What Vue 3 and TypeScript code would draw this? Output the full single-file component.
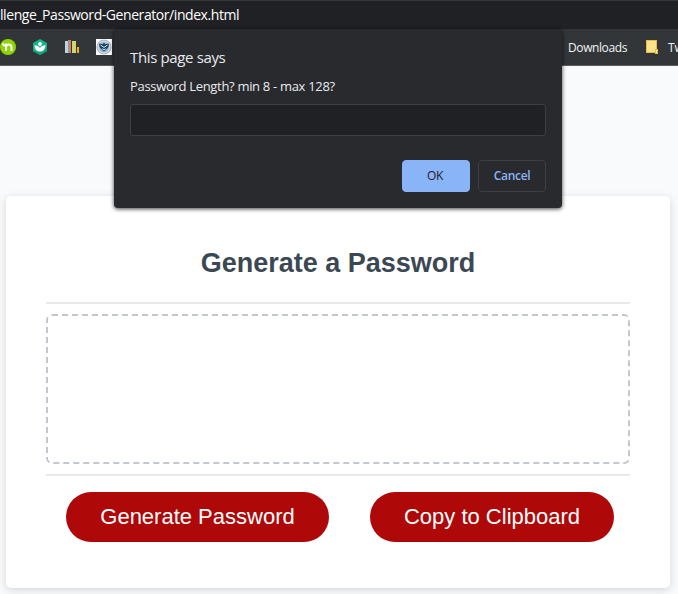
<script setup lang="ts">
import { ref } from 'vue'

const passwordLength = ref<string>('')
const password = ref<string>('')
</script>

<template>
  <div class="window">
    <div class="address"><span class="url">llenge_Password-Generator/index.html</span></div>
    <nav class="bookmarks">
      <svg class="icon" viewBox="0 0 16 16">
        <circle cx="8" cy="8" r="8" fill="#8ed500" />
        <path d="M3 4.200c0 1.800.8 2.600 3 2.600M6 12V4.500M6 8.500c0-4 5.500-4 5.500 0V12" fill="none" stroke="#fff" stroke-width="2" />
      </svg>
      <svg class="icon" viewBox="0 0 16 16">
        <path d="M8 0l7 3.900v8.200L8 16l-7-3.900V3.900z" fill="#12b58b" />
        <path d="M1 12.100L15 8v4.100L8 16z" fill="#0aa57c" />
        <path d="M2.500 6.300c2.700.1 4.400 1 5.500 2.800 1.100-1.800 2.800-2.700 5.500-2.800-.2 4.200-2.200 6.300-5.500 6.300s-5.300-2.100-5.500-6.300z" fill="#fff" />
        <circle cx="8" cy="5" r="1.900" fill="#fff" />
      </svg>
      <svg class="icon" viewBox="0 0 16 16">
        <path d="M1 2h3v12H1z" fill="#b4d7df" />
        <path d="M4 1h3v13H4z" fill="#c77f80" />
        <path d="M8 2h4v12H8z" fill="#cbd86b" />
        <path d="M13 8h2v6h-2z" fill="#f4b400" />
      </svg>
      <svg class="icon" viewBox="0 0 16 16">
        <path d="M0 0h16v16H0z" fill="#fff" />
        <circle cx="8" cy="8" r="6.900" fill="#d5dce2" stroke="#b3bac4" stroke-width="1.400" />
        <circle cx="8" cy="8" r="5.200" fill="#8fb9d2" />
        <path d="M3.200 4.500l3.300.8L8 4l1.500 1.300 3.300-.8c.2 2.800-.8 4.400-2.200 5.500L8 12.600 5.400 10C4 8.900 3 7.300 3.200 4.500z" fill="#173f65" />
        <path d="M4.500 6L8 8.400 11.500 6M6.300 9.700L8 10.800l1.700-1.100" fill="none" stroke="#e9f0f4" stroke-width="1" />
      </svg>
      <span class="bookmark downloads">Downloads</span>
      <svg class="folder" viewBox="0 0 12 14">
        <path d="M0 0h11v9h1v5H9v-1H0z" fill="#e5bd4d" />
        <path d="M1 1h9v8H9v3H1z" fill="#ffe28a" />
        <path d="M10 10h1v3h-1z" fill="#ffe28a" />
      </svg>
      <span class="bookmark twitter">Tw</span>
    </nav>

    <main class="page">
      <section class="card">
        <h2 class="title">Generate a Password</h2>
        <div class="card-body">
          <div class="password">{{ password }}</div>
        </div>
        <div class="actions">
          <button class="pill generate">Generate Password</button>
          <button class="pill copy">Copy to Clipboard</button>
        </div>
      </section>
    </main>

    <div class="dialog" role="dialog">
      <div class="heading"><span>This page says</span></div>
      <div class="message"><span>Password Length? min 8 - max 128?</span></div>
      <input v-model="passwordLength" class="field" type="text" />
      <div class="dialog-actions">
        <button class="choice ok"><span>OK</span></button>
        <button class="choice cancel"><span>Cancel</span></button>
      </div>
    </div>
  </div>
</template>

<style>
body {
  overflow: hidden;
}
</style>

<style scoped>
* {
  box-sizing: border-box;
}
.window {
  position: relative;
  display: flex;
  flex-direction: column;
  width: 678px;
  height: 594px;
  overflow: hidden;
  background: #f9fafc;
  font-family: "Open Sans", "Noto Sans", sans-serif;
}
.address {
  height: 29px;
  flex: none;
  border-top: 1px solid #35363a;
  background: #202124;
  color: #fff;
  font-size: 14px;
  line-height: 28px;
  white-space: nowrap;
}
.url {
  letter-spacing: -0.43px;
}
.bookmarks {
  display: flex;
  flex: none;
  align-items: center;
  height: 37px;
  border-bottom: 1px solid #5b5c60;
  background: #323639;
  color: #f1f3f4;
  font-size: 12px;
  white-space: nowrap;
}
.icon {
  width: 16px;
  height: 16px;
  margin-right: 16px;
  flex: none;
}
.downloads {
  width: 78px;
  margin-left: 440px;
  flex: none;
  letter-spacing: -0.4px;
}
.folder {
  width: 12px;
  height: 14px;
  margin-right: 10px;
  flex: none;
}
.page {
  flex: 1;
  padding: 130px 8px 0 6px;
}
.card {
  height: 392px;
  padding: 50px 40px 0;
  border-radius: 5px;
  background: #fff;
  box-shadow: rgba(0, 0, 0, 0.15) 0 2px 9px;
  font-family: "Liberation Sans", Arial, sans-serif;
}
.title {
  height: 56px;
  margin: 0;
  color: #3b4854;
  font-size: 27px;
  line-height: 35px;
  text-align: center;
}
.card-body {
  height: 174px;
  padding: 10px 0;
  border-top: 2px solid #e8e8e8;
  border-bottom: 2px solid #e8e8e8;
}
.password {
  height: 150px;
  border: 2px dashed #c3c7cf;
  border-radius: 6px;
}
.actions {
  display: flex;
  gap: 41px;
  padding: 16px 0 0 20px;
}
.pill {
  flex: none;
  height: 50px;
  padding: 0;
  border: 0;
  border-radius: 25px;
  background: #ae0808;
  color: #fff;
  font-family: inherit;
  font-size: 22px;
}
.generate {
  width: 263px;
}
.copy {
  width: 244px;
}
.dialog {
  position: absolute;
  top: 29px;
  left: 114px;
  width: 448px;
  height: 179px;
  padding: 16px;
  border-radius: 4px;
  background: #292a2d;
  color: #e8eaed;
  box-shadow: 0 1px 4px rgba(0, 0, 0, 0.75);
  white-space: nowrap;
}
.heading {
  height: 26px;
  font-size: 15px;
  line-height: 24px;
  letter-spacing: -0.36px;
}
.message {
  height: 33px;
  font-size: 13px;
  line-height: 31px;
  letter-spacing: -0.31px;
}
.field {
  display: block;
  width: 416px;
  height: 32px;
  padding: 0 8px;
  border: 1px solid #3c4043;
  border-radius: 3px;
  outline: 0;
  background: #202124;
  color: #e8eaed;
}
.dialog-actions {
  display: flex;
  justify-content: flex-end;
  gap: 8px;
  padding-top: 24px;
}
.choice {
  width: 68px;
  height: 32px;
  padding: 0 0 2px;
  border: 1px solid #3c4043;
  border-radius: 4px;
  background: #292a2d;
  color: #8ab4f8;
  font-family: inherit;
  font-size: 12px;
}
.ok {
  padding-right: 2px;
  border-color: #8ab4f8;
  background: #8ab4f8;
  color: #202124;
  letter-spacing: -0.4px;
}
.cancel {
  font-weight: 600;
  letter-spacing: -0.3px;
}
</style>
